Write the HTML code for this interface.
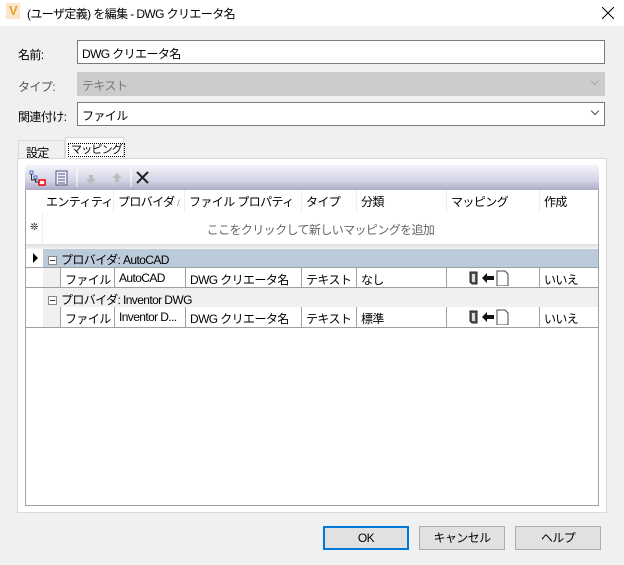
<!DOCTYPE html><html><head><meta charset="utf-8"><style>
*{box-sizing:border-box}body{margin:0;width:624px;height:565px;background:#f0f0f0;font-family:"Liberation Sans","Noto Sans CJK JP",sans-serif;font-size:12px;letter-spacing:-0.6px;color:#000;position:relative;overflow:hidden}
.a{position:absolute;white-space:nowrap}
.inp{position:absolute;left:77px;width:528px;height:24px;border:1px solid #7a7a7a;background:#fff;padding:4px 4px;font-size:12px}
.lbl{position:absolute;left:18px;font-size:12px}
.c{position:absolute;top:0;height:100%;border-right:1px solid #a0a0a0;padding:3px 4px;white-space:nowrap;overflow:hidden}
.btn{position:absolute;top:526px;height:24px;border:1px solid #adadad;background:#e1e1e1;text-align:center;line-height:22px}
.chev{position:absolute;right:6px;top:5px;width:6px;height:6px;border-right:1px solid #555;border-bottom:1px solid #555;transform:rotate(45deg)}
.bx{display:inline-block;width:9px;height:9px;border:1px solid #888;position:relative;vertical-align:-1px;margin-right:4px;background:#fff}
.bx:after{content:"";position:absolute;left:1px;top:3px;width:5px;height:1px;background:#333}
</style></head><body>
<div class="a" style="left:0;top:0;width:624px;height:26px;background:#fff"></div>
<div class="a" style="left:6px;top:3px;width:14px;height:16px;background:#fbe6cc;color:#e8a030;font-weight:bold;font-size:13px;text-align:center;line-height:16px">V</div>
<div class="a" style="left:27px;top:5px;font-size:12px">(ユーザ定義) を編集 - DWG クリエータ名</div>
<svg class="a" style="left:602px;top:7px" width="12" height="12"><path d="M0 0L12 12M12 0L0 12" stroke="#000" stroke-width="1"/></svg>

<div class="lbl" style="top:46px">名前:</div>
<div class="inp" style="top:40px">DWG クリエータ名</div>
<div class="lbl" style="top:78px;color:#555">タイプ:</div>
<div class="inp" style="top:72px;background:#ccc;border-color:#ccc;color:#777">テキスト<div class="chev" style="border-color:#aaa"></div></div>
<div class="lbl" style="top:108px">関連付け:</div>
<div class="inp" style="top:102px">ファイル<div class="chev"></div></div>

<div class="a" style="left:18px;top:140px;width:47px;height:19px;border:1px solid #d9d9d9;border-bottom:none;background:#f0f0f0;padding:3px 7px">設定</div>
<div class="a" style="left:65px;top:137px;width:59px;height:22px;border:1px solid #d9d9d9;border-bottom:none;background:#fff;padding:3px 3px;font-size:11px;letter-spacing:-0.8px"><span style="outline:1px dotted #000;padding:0 2px">マッピング</span></div>
<div class="a" style="left:17px;top:158px;width:590px;height:355px;border:1px solid #d9d9d9;background:#fff"></div>

<div class="a" style="left:25px;top:165px;width:574px;height:26px;background:linear-gradient(#f4f4fa,#d4d4e6 60%,#a6a6c0)"></div>
<svg class="a" style="left:29px;top:169px" width="120" height="18"><rect x="1" y="2" width="3" height="3" fill="none" stroke="#4a70c0"/><rect x="5" y="7" width="3" height="3" fill="none" stroke="#4a70c0"/><path d="M2.5 5v6h5M6.5 10v3h3" stroke="#333" fill="none"/><rect x="10" y="11" width="6" height="5" fill="#fff" stroke="#e00" stroke-width="1.5"/>
<rect x="27" y="2" width="11" height="14" fill="#eef" stroke="#557"/><path d="M29 5h7M29 8h7M29 11h7M29 14h7" stroke="#557"/>
<line x1="48" y1="0" x2="48" y2="18" stroke="#fff"/><path d="M60 6h4v4h3l-5 5-5-5h3z" fill="#bbb"/><path d="M86 13h4v-4h3l-5-5-5 5h3z" fill="#bbb"/>
<line x1="102" y1="0" x2="102" y2="18" stroke="#fff"/><path d="M108 3l11 11M119 3l-11 11" stroke="#222" stroke-width="2"/></svg>

<div class="a" style="left:25px;top:190px;width:574px;height:316px;border:1px solid #a0a0a0;border-top:none;background:#fff"></div>
<div class="a" style="left:25px;top:190px;width:574px;height:23px">
<div class="c" style="left:17px;width:72px;border-right-color:#eee">エンティティ</div><div class="c" style="left:89px;width:71px;border-right-color:#eee">プロバイダ <span style="color:#888;font-size:9px">/</span></div><div class="c" style="left:160px;width:117px;border-right-color:#eee">ファイル プロパティ</div><div class="c" style="left:277px;width:55px;border-right-color:#eee">タイプ</div><div class="c" style="left:332px;width:90px;border-right-color:#eee">分類</div><div class="c" style="left:422px;width:93px;border-right-color:#eee">マッピング</div><div class="c" style="left:515px;width:59px;border:none">作成</div></div>
<div class="a" style="left:30px;top:222px;font-size:10px">❊</div>
<div class="a" style="left:42px;top:213px;width:556px;height:31px;border-left:1px solid #eee;text-align:center;padding-top:8px;color:#666">ここをクリックして新しいマッピングを追加</div>
<div class="a" style="left:26px;top:244px;width:572px;height:5px;background:linear-gradient(#ddd,#f4f4f4)"></div>
<div class="a" style="left:33px;top:253px;width:0;height:0;border-left:5px solid #000;border-top:5px solid transparent;border-bottom:5px solid transparent"></div>

<div class="a" style="left:43px;top:249px;width:555px;height:18px;background:#bccbd9;padding:2px 5px"><span class="bx"></span>プロバイダ: AutoCAD</div>
<div class="a" style="left:43px;top:287px;width:555px;height:20px;background:#f0f0f0;padding:3px 5px;border-top:1px solid #a0a0a0"><span class="bx"></span>プロバイダ: Inventor DWG</div>
<div class="a" style="left:43px;top:267px;width:17px;height:20px;background:#f0f0f0"></div>
<div class="a" style="left:43px;top:307px;width:17px;height:20px;background:#f0f0f0"></div>

<div class="a" style="left:25px;top:267px;width:574px;height:21px;border-top:1px solid #a0a0a0;border-bottom:1px solid #a0a0a0">
<div class="c" style="left:35px;width:55px;border-left:1px solid #a0a0a0">ファイル</div><div class="c" style="left:90px;width:71px">AutoCAD</div><div class="c" style="left:161px;width:116px">DWG クリエータ名</div><div class="c" style="left:277px;width:55px">テキスト</div><div class="c" style="left:332px;width:90px">なし</div><div class="c" style="left:422px;width:93px;padding:2px 0 0 22px"><svg width="50" height="16"><path d="M1 2h7v12H3l-2-2z" fill="#555" stroke="#222"/><path d="M3 4h3v8H3z" fill="#ddd"/><path d="M13 8l5-5v3h7v4h-7v3z" fill="#111"/><path d="M28 1h8l3 3v12H28z" fill="#fff" stroke="#444"/></svg></div><div class="c" style="left:515px;width:59px;border:none">いいえ</div></div>
<div class="a" style="left:25px;top:307px;width:574px;height:21px;border-bottom:1px solid #a0a0a0">
<div class="c" style="left:35px;width:55px;border-left:1px solid #a0a0a0">ファイル</div><div class="c" style="left:90px;width:71px">Inventor D...</div><div class="c" style="left:161px;width:116px">DWG クリエータ名</div><div class="c" style="left:277px;width:55px">テキスト</div><div class="c" style="left:332px;width:90px">標準</div><div class="c" style="left:422px;width:93px;padding:2px 0 0 22px"><svg width="50" height="16"><path d="M1 2h7v12H3l-2-2z" fill="#555" stroke="#222"/><path d="M3 4h3v8H3z" fill="#ddd"/><path d="M13 8l5-5v3h7v4h-7v3z" fill="#111"/><path d="M28 1h8l3 3v12H28z" fill="#fff" stroke="#444"/></svg></div><div class="c" style="left:515px;width:59px;border:none">いいえ</div></div>

<div class="btn" style="left:323px;width:86px;border:2px solid #0078d7;line-height:20px">OK</div>
<div class="btn" style="left:419px;width:86px">キャンセル</div>
<div class="btn" style="left:515px;width:86px">ヘルプ</div>
</body></html>
